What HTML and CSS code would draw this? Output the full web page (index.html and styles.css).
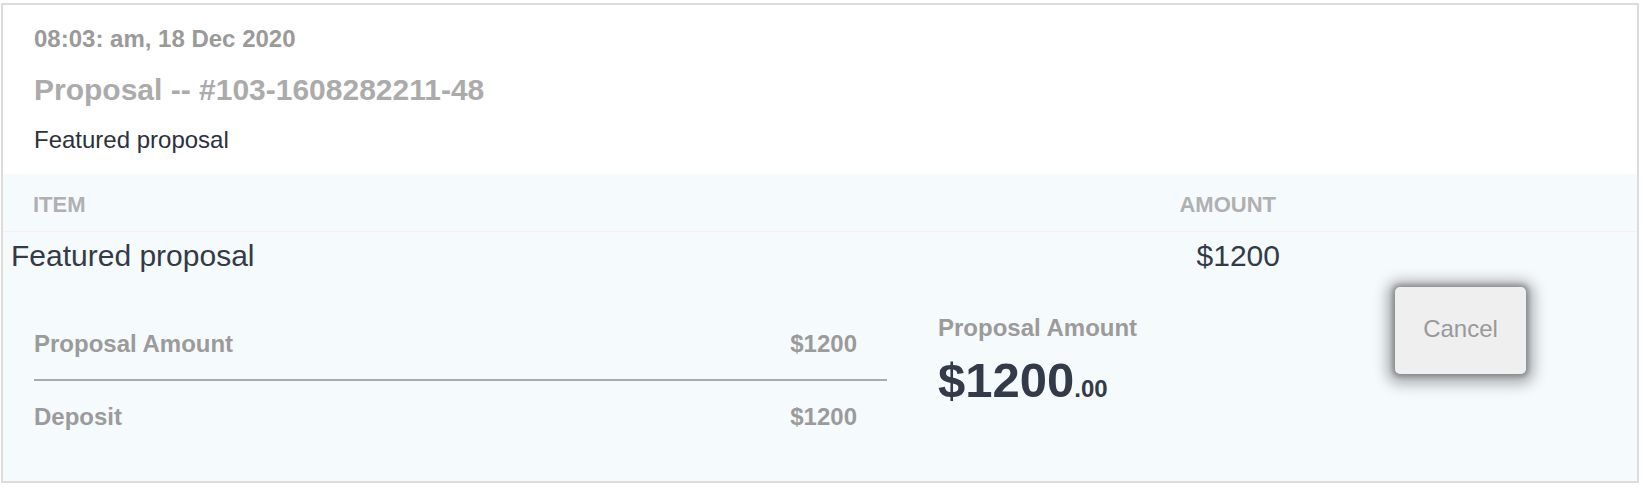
FILE: index.html
```html
<!DOCTYPE html>
<html lang="en">
<head>
<meta charset="utf-8">
<title>Proposal</title>
<link rel="stylesheet" href="styles.css">
</head>
<body>
<div class="card">
  <div class="top">
    <div class="date">08:03: am, 18 Dec 2020</div>
    <div class="title">Proposal -- #103-1608282211-48</div>
    <div class="subtitle">Featured proposal</div>
  </div>
  <div class="band">
    <div class="thead">
      <span>Item</span>
      <span>Amount</span>
    </div>
    <div class="trow">
      <span>Featured proposal</span>
      <span>$1200</span>
    </div>
    <div class="summary">
      <div class="totals">
        <div class="tot-row"><span>Proposal Amount</span><span>$1200</span></div>
        <div class="tot-line"></div>
        <div class="tot-row"><span>Deposit</span><span>$1200</span></div>
      </div>
      <div class="grand">
        <div class="grand-label">Proposal Amount</div>
        <div class="grand-value">$1200<span class="cents">.00</span></div>
      </div>
      <button class="cancel" type="button">Cancel</button>
    </div>
  </div>
</div>
</body>
</html>
```

FILE: styles.css
```css
html, body {
  margin: 0;
  padding: 0;
  background: #ffffff;
}

body {
  font-family: "Liberation Sans", Arial, sans-serif;
}

.card {
  margin: 3px 3px 0 1px;
  border: 2px solid #dcdcdc;
  height: 476px;
  display: flex;
  flex-direction: column;
}

.top {
  padding: 16px 31px 16px;
}

.date {
  font-size: 24px;
  line-height: 36px;
  font-weight: bold;
  color: #9a9a9a;
}

.title {
  margin-top: 10px;
  font-size: 30px;
  line-height: 45px;
  font-weight: bold;
  color: #ababab;
}

.subtitle {
  margin-top: 10px;
  font-size: 24px;
  line-height: 36px;
  color: #2b313d;
}

.band {
  flex: 1;
  background: #f5fafd;
}

.thead {
  display: flex;
  justify-content: space-between;
  padding: 14px 361px 10px 30px;
  border-bottom: 1px solid #fbf0f0;
  font-size: 22px;
  line-height: 33px;
  font-weight: bold;
  text-transform: uppercase;
  color: #b0b0b0;
}

.trow {
  display: flex;
  justify-content: space-between;
  padding: 1px 357px 0 8px;
  font-size: 30px;
  line-height: 45px;
  color: #333a48;
}

.summary {
  display: flex;
  align-items: flex-start;
}

.totals {
  width: 853px;
  padding: 48px 0 0 31px;
}

.tot-row {
  display: flex;
  justify-content: space-between;
  padding-right: 30px;
  font-size: 24px;
  line-height: 36px;
  font-weight: bold;
  color: #9b9b9b;
}

.tot-line {
  height: 2px;
  background: #ababab;
  margin: 17px 0 18px;
}

.grand {
  width: 457px;
  margin-left: 51px;
  padding-top: 32px;
}

.grand-label {
  font-size: 24px;
  line-height: 36px;
  font-weight: bold;
  color: #9b9b9b;
}

.grand-value {
  margin-top: 6px;
  font-size: 49px;
  line-height: 56px;
  font-weight: bold;
  color: #333a48;
}

.cents {
  font-size: 24px;
}

.cancel {
  margin-top: 9px;
  width: 131px;
  height: 87px;
  padding: 0 0 4px;
  border: none;
  border-radius: 5px;
  background: #efefef;
  box-shadow: 0 0 4px 3px rgba(0, 0, 0, 0.22), 0 2px 14px 8px rgba(0, 0, 0, 0.3);
  font-family: "Liberation Sans", Arial, sans-serif;
  font-size: 24px;
  color: #999999;
}
```
